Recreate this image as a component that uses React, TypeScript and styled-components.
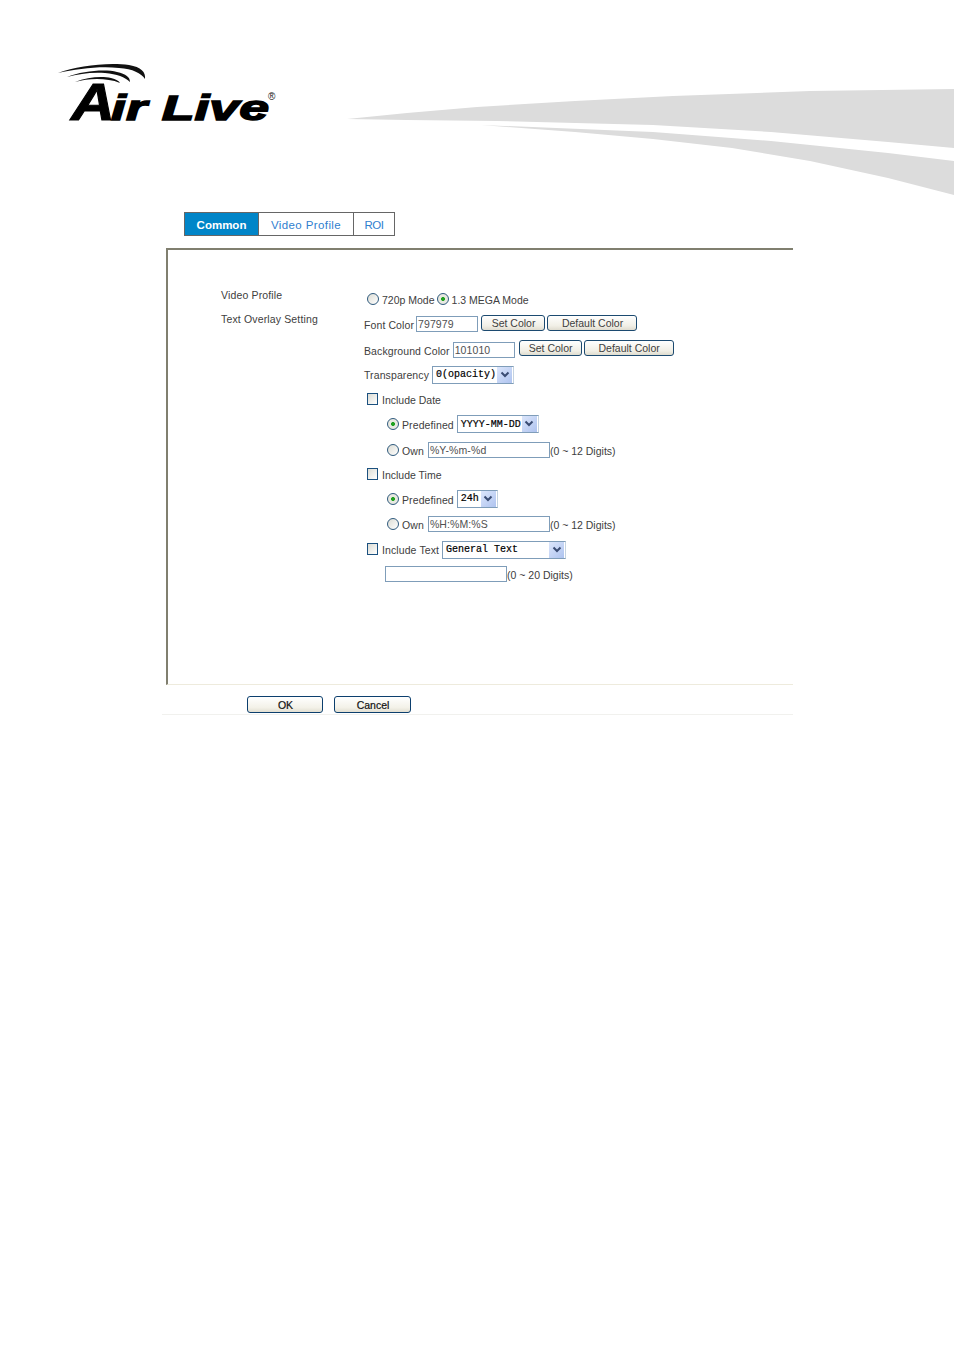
import React from "react";
import styled, { createGlobalStyle } from "styled-components";

const GlobalStyle = createGlobalStyle`
  html, body {
    margin: 0;
    background: #fff;
    font-family: "Liberation Sans", Arial, sans-serif;
  }
`;

const Page = styled.div`
  width: 954px;
  height: 1350px;
  overflow: hidden;
`;

const Header = styled.header`
  display: flex;
  align-items: flex-start;
  height: 212px;
  padding-left: 57px;
`;

const LogoSvg = styled.svg`
  flex: none;
  margin-top: 62px;
`;

const Swoosh = styled.svg`
  flex: none;
  margin-top: 88px;
  margin-left: 68px;
`;

const Tabs = styled.nav`
  display: flex;
  height: 24px;
  margin-left: 184px;
  margin-bottom: 12px;
`;

const Tab = styled.a<{ $active?: boolean; $w: number; $track?: number }>`
  box-sizing: border-box;
  width: ${(p) => p.$w}px;
  display: flex;
  align-items: center;
  justify-content: center;
  padding-top: 1px;
  margin-right: -1px;
  border: 1px solid #666;
  font-size: 11.5px;
  letter-spacing: ${(p) => p.$track ?? 0}px;
  font-weight: ${(p) => (p.$active ? "bold" : "normal")};
  color: ${(p) => (p.$active ? "#fff" : "#2f80cf")};
  background: ${(p) => (p.$active ? "#0085c8" : "#fff")};
`;

const Panel = styled.section`
  box-sizing: border-box;
  display: flex;
  width: 627px;
  height: 437px;
  margin-left: 166px;
  padding: 33px 0 0 53px;
  border-top: 2px solid #807f6f;
  border-left: 2px solid #807f6f;
  border-bottom: 1px solid #eeebdd;
`;

const Labels = styled.div`
  width: 143px;
  flex: none;
`;

const SideLabel = styled.div`
  height: 24px;
  line-height: 24px;
  font-size: 10.5px;
  letter-spacing: 0.15px;
  color: #404040;
`;

const Fields = styled.div`
  margin-top: 3px;
  display: flex;
  flex-direction: column;
`;

const Row = styled.div<{ $indent?: number; $h?: number }>`
  display: flex;
  align-items: center;
  height: ${(p) => p.$h ?? 25}px;
  padding-left: ${(p) => p.$indent ?? 0}px;
`;

const Text = styled.span<{ $gap?: number; $track?: number }>`
  font-size: 10.5px;
  letter-spacing: ${(p) => p.$track ?? 0.1}px;
  color: #404040;
  white-space: nowrap;
  margin-top: 2px;
  margin-right: ${(p) => p.$gap ?? 3}px;
`;

const Radio = styled.span<{ $on?: boolean }>`
  box-sizing: border-box;
  flex: none;
  width: 12px;
  height: 12px;
  margin: 0 3px 0 3px;
  border: 1px solid #2f5a7d;
  border-radius: 50%;
  background: ${(p) =>
    p.$on
      ? "radial-gradient(circle, #21a121 0 1.6px, #e9e9e1 2.3px)"
      : "linear-gradient(135deg, #dcdcd4, #fff)"};
`;

const Check = styled.span`
  box-sizing: border-box;
  flex: none;
  width: 11px;
  height: 12px;
  margin: 0 4px 0 3px;
  border: 1px solid #1c5180;
  background: linear-gradient(135deg, #dcdcd4, #fff);
`;

const Field = styled.input<{ $w: number; $after?: number }>`
  box-sizing: border-box;
  flex: none;
  width: ${(p) => p.$w}px;
  height: 16px;
  padding: 0 1px;
  margin: 0 ${(p) => p.$after ?? 0}px 0 0;
  border: 1px solid #7f9db9;
  outline: none;
  font-family: "Liberation Sans", Arial, sans-serif;
  font-size: 10.5px;
  letter-spacing: 0.1px;
  color: #505050;
  background: #fff;
`;

const ColorButton = styled.button<{ $w: number; $gap?: number }>`
  box-sizing: border-box;
  flex: none;
  width: ${(p) => p.$w}px;
  height: 16px;
  margin: 0 ${(p) => p.$gap ?? 2}px 3px 0;
  padding: 0 0 0 1px;
  border: 1px solid #1c4a70;
  border-radius: 3px;
  background: linear-gradient(#fff, #f1efe6 70%, #dfdccf);
  font-family: "Liberation Sans", Arial, sans-serif;
  font-size: 10.5px;
  color: #404040;
`;

const Select = styled.div<{ $w: number; $drop?: number }>`
  box-sizing: border-box;
  flex: none;
  display: flex;
  align-items: center;
  justify-content: space-between;
  width: ${(p) => p.$w}px;
  height: 18px;
  margin-top: ${(p) => p.$drop ?? 0}px;
  padding: 0 1px 0 3px;
  border: 1px solid #7f9db9;
  border-right-color: #c5d3e0;
  font-family: "Liberation Mono", "Courier New", monospace;
  font-size: 10px;
  color: #000;
  -webkit-text-stroke: 0.2px #000;
`;

const Arrow = styled.span`
  flex: none;
  display: flex;
  align-items: center;
  justify-content: center;
  width: 15px;
  height: 16px;
  background: linear-gradient(135deg, #dce6fb, #aec3ef);
`;

const Footer = styled.footer`
  box-sizing: border-box;
  display: flex;
  gap: 11px;
  width: 631px;
  height: 30px;
  margin-left: 162px;
  padding: 11px 0 0 85px;
  border-bottom: 1px solid #f1f1ee;
`;

const ActionButton = styled.button<{ $w: number }>`
  box-sizing: border-box;
  width: ${(p) => p.$w}px;
  height: 17px;
  padding: 0 0 0 1px;
  border: 1px solid #0c3f6e;
  border-radius: 3px;
  background: linear-gradient(#fff, #f3f1e8 70%, #e2dfd2);
  font-family: "Liberation Sans", Arial, sans-serif;
  font-size: 10.5px;
  color: #111;
  -webkit-text-stroke: 0.2px #111;
`;

const Chevron = () => (
  <svg width="10" height="8" viewBox="0 0 10 8">
    <path d="M1.5 1.5 5 5l3.5-3.5" fill="none" stroke="#3a4c73" strokeWidth="2" />
  </svg>
);

const Dropdown = ({ w, value, drop }: { w: number; value: string; drop?: number }) => (
  <Select $w={w} $drop={drop}>
    <span>{value}</span>
    <Arrow>
      <Chevron />
    </Arrow>
  </Select>
);

const Logo = () => (
  <LogoSvg width="222" height="72" viewBox="0 0 222 72">
    <path d="M1 11C20 4 50 0 72 3c12 2 17 7 16 14-4-6-12-10-26-11C42 4 20 7 1 11Z" fill="#111" />
    <path d="M10 15C25 9 48 7 60 10c9 2 13 5 13 10-5-5-13-8-25-9-14-1-26 1-38 4Z" fill="#111" />
    <path d="M18 20c12-5 27-6 36-4 5 1 8 3 9 5-7-3-15-4-23-4-8 0-15 1-22 3Z" fill="#111" />
    <text
      x="14"
      y="58"
      fontFamily="Liberation Sans"
      fontWeight="bold"
      fontStyle="italic"
      fontSize="52"
      stroke="#000"
      strokeWidth="1"
      textLength="44"
      lengthAdjust="spacingAndGlyphs"
    >
      A
    </text>
    <text
      x="54"
      y="58"
      fontFamily="Liberation Sans"
      fontWeight="bold"
      fontStyle="italic"
      fontSize="35"
      stroke="#000"
      strokeWidth="1.4"
      textLength="158"
      lengthAdjust="spacingAndGlyphs"
    >
      ir Live
    </text>
    <text x="211" y="38" fontFamily="Liberation Sans" fontSize="10" fill="#111">
      ®
    </text>
  </LogoSvg>
);

const SWOOSH_TOP =
  "M0 31 60 25 130 19 228 13 326 8 463 3 607 1V60L541 54 424 44 306 37 150 33 60 32Z";
const SWOOSH_LOW =
  "M134 37 306 44 424 53 541 65 607 73V107L541 90 463 73 385 60 306 51 228 44Z";

export default function App() {
  return (
    <Page>
      <GlobalStyle />
      <Header>
        <Logo />
        <Swoosh width="607" height="107" viewBox="0 0 607 107">
          <path d={SWOOSH_TOP} fill="#dcdcdc" />
          <path d={SWOOSH_LOW} fill="#dcdcdc" />
        </Swoosh>
      </Header>

      <Tabs>
        <Tab $active $w={75}>Common</Tab>
        <Tab $w={96} $track={0.4}>Video Profile</Tab>
        <Tab $w={42} $track={-0.5}>ROI</Tab>
      </Tabs>

      <Panel>
        <Labels>
          <SideLabel>Video Profile</SideLabel>
          <SideLabel>Text Overlay Setting</SideLabel>
        </Labels>
        <Fields>
          <Row>
            <Radio />
            <Text $gap={-1} $track={0}>720p Mode</Text>
            <Radio $on />
            <Text $track={0}>1.3 MEGA Mode</Text>
          </Row>
          <Row $h={26}>
            <Text $gap={2}>Font Color</Text>
            <Field $w={62} $after={3} defaultValue="797979" />
            <ColorButton $w={64}>Set Color</ColorButton>
            <ColorButton $w={90}>Default Color</ColorButton>
          </Row>
          <Row>
            <Text>Background Color</Text>
            <Field $w={62} $after={4} defaultValue="101010" />
            <ColorButton $w={63}>Set Color</ColorButton>
            <ColorButton $w={90}>Default Color</ColorButton>
          </Row>
          <Row $h={24}>
            <Text>Transparency</Text>
            <Dropdown w={82} value="0(opacity)" drop={1} />
          </Row>
          <Row>
            <Check />
            <Text $track={0}>Include Date</Text>
          </Row>
          <Row $indent={20} $h={26}>
            <Radio $on />
            <Text>Predefined</Text>
            <Dropdown w={82} value="YYYY-MM-DD" />
          </Row>
          <Row $indent={20}>
            <Radio />
            <Text $gap={4}>Own</Text>
            <Field $w={122} defaultValue="%Y-%m-%d" />
            <Text $gap={0} $track={0}>(0 ~ 12 Digits)</Text>
          </Row>
          <Row $h={24}>
            <Check />
            <Text $track={0}>Include Time</Text>
          </Row>
          <Row $indent={20}>
            <Radio $on />
            <Text>Predefined</Text>
            <Dropdown w={41} value="24h" />
          </Row>
          <Row $indent={20}>
            <Radio />
            <Text $gap={4}>Own</Text>
            <Field $w={122} defaultValue="%H:%M:%S" />
            <Text $gap={0} $track={0}>(0 ~ 12 Digits)</Text>
          </Row>
          <Row>
            <Check />
            <Text>Include Text</Text>
            <Dropdown w={124} value="General Text" drop={2} />
          </Row>
          <Row $indent={21}>
            <Field $w={122} defaultValue="" />
            <Text $gap={0} $track={0}>(0 ~ 20 Digits)</Text>
          </Row>
        </Fields>
      </Panel>

      <Footer>
        <ActionButton $w={76}>OK</ActionButton>
        <ActionButton $w={77}>Cancel</ActionButton>
      </Footer>
    </Page>
  );
}
